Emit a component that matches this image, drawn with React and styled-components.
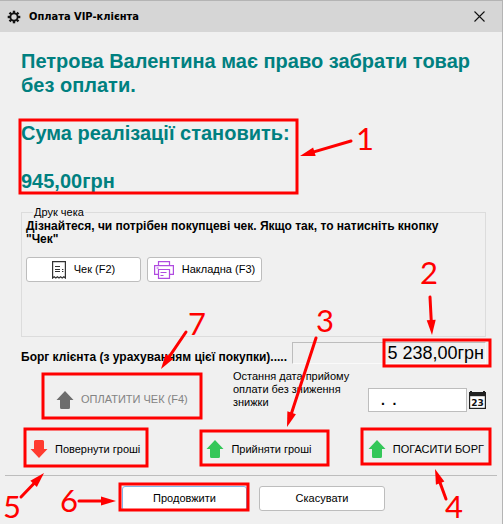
import React, { useState } from "react";
import styled, { createGlobalStyle } from "styled-components";

const marks = [
  { n: 1, x: 356, y: 150, frame: [20, 120, 277, 73], arrow: [351, 141, 300, 156] },
  { n: 2, x: 420, y: 284, frame: [384, 340, 106, 26], arrow: [430, 297, 432, 335] },
  { n: 3, x: 316, y: 332, frame: [201, 431, 127, 34], arrow: [316, 338, 287, 427] },
  { n: 4, x: 445, y: 518, frame: [362, 429, 128, 35], arrow: [446, 499, 435, 469] },
  { n: 5, x: 3, y: 518, frame: [25, 429, 122, 37], arrow: [21, 497, 44, 473] },
  { n: 6, x: 60, y: 512, frame: [120, 484, 128, 26], arrow: [79, 501, 116, 501] },
  { n: 7, x: 188, y: 335, frame: [43, 374, 158, 44], arrow: [186, 332, 161, 369] },
];

const GearIcon = () => (
  <svg width="14" height="14" viewBox="-7 -7 14 14" aria-hidden="true">
    <circle r="3.6" fill="none" stroke="#111" strokeWidth="1.8" />
    {[0, 45, 90, 135, 180, 225, 270, 315].map(a => (
      <rect key={a} x="-1.2" y="-6.3" width="2.4" height="2.4" fill="#111" transform={`rotate(${a})`} />
    ))}
  </svg>
);

const CloseIcon = () => (
  <svg width="11" height="11" viewBox="0 0 11 11" aria-hidden="true">
    <path d="M0.5 0.5l10 10M10.5 0.5l-10 10" stroke="#111" strokeWidth="1.1" />
  </svg>
);

const ReceiptIcon = () => (
  <svg width="14" height="18" viewBox="0 0 14 18" fill="none" stroke="#333" aria-hidden="true">
    <path d="M0.6 17V0.6h12.8V17l-1.6-1.3-1.6 1.3-1.6-1.3L7 17l-1.6-1.3L3.8 17l-1.6-1.3z" strokeWidth="1.2" />
    <path d="M3 5.5h5M3 8.5h5M3 10.5h5M10 8.5h1.4M10 10.5h1.4" />
  </svg>
);

const PrinterIcon = () => (
  <svg width="20" height="18" viewBox="0 0 20 18" fill="none" stroke="#b04be0" strokeWidth="1.2" aria-hidden="true">
    <path d="M4.5 4.5V0.6h11v3.9M4.5 13.4H0.6V4.6h18.8v8.8h-3.9" />
    <path d="M4.5 8.5h11v8.9h-11zM2.6 7h2M6.5 11.5h6M6.5 14.5h3" />
  </svg>
);

const ArrowIcon = ({ color, down }) => (
  <svg width="18" height="18" viewBox="0 0 18 18" aria-hidden="true">
    <path
      d="M9 0l8.5 9H14v7.500q0 1.500-1.500 1.500H5.500q-1.500 0-1.500-1.500V9H0.500z"
      fill={color}
      transform={down ? "rotate(180 9 9)" : undefined}
    />
  </svg>
);

const CalendarIcon = () => (
  <svg width="17" height="18" viewBox="0 0 17 18" aria-hidden="true">
    <path d="M1 0h2v1h11V0h2v1h1v17H0V1h1z" fill="#222" />
    <path d="M1.200 5.200h14.600v11.600H1.200z" fill="#fff" />
    <text x="8.500" y="15" textAnchor="middle" fontSize="9" fontWeight="700" fontFamily="DejaVu Sans, sans-serif" fill="#111">
      23
    </text>
  </svg>
);

// arrow head is a triangle whose tip sits on the end point
const Arrow = ({ points: [x1, y1, x2, y2] }) => {
  const angle = (Math.atan2(y2 - y1, x2 - x1) * 180) / Math.PI;
  const length = Math.hypot(x2 - x1, y2 - y1);
  return (
    <g transform={`translate(${x1} ${y1}) rotate(${angle})`}>
      <path d={`M0 0H${length - 10}`} stroke="#f00" strokeWidth="3" strokeLinecap="round" />
      <path d={`M${length} 0l-15 -4.500v9z`} fill="#f00" />
    </g>
  );
};

const App = () => {
  const [date, setDate] = useState(" .  .");

  return (
    <>
      <GlobalStyle />
      <StWindow>
        <StTitleBar>
          <GearIcon />
          <StTitle>Оплата VIP-клієнта</StTitle>
          <StIconButton type="button" aria-label="Закрити">
            <CloseIcon />
          </StIconButton>
        </StTitleBar>

        <StMain>
          <StMessage>Петрова Валентина має право забрати товар без оплати.</StMessage>
          <StMessage>
            Сума реалізації становить:
            <br />
            <br />
            945,00грн
          </StMessage>

          <StGroup>
            <StLegend>Друк чека</StLegend>
            <StHint>
              Дізнайтеся, чи потрібен покупцеві чек. Якщо так, то натисніть кнопку
              <br />
              "Чек"
            </StHint>
            <StPrintButtons>
              <StButton type="button" $width={115}>
                <ReceiptIcon />
                Чек (F2)
              </StButton>
              <StButton type="button" $width={115}>
                <PrinterIcon />
                Накладна (F3)
              </StButton>
            </StPrintButtons>
          </StGroup>

          <StDebtRow>
            <StDebtLabel htmlFor="debt">Борг клієнта (з урахуванням цієї покупки).....</StDebtLabel>
            <StDebtInput id="debt" value="5 238,00грн" readOnly />
          </StDebtRow>

          <StPayRow>
            <StFlatButton type="button" disabled $width={161} $height={49}>
              <ArrowIcon color="#6d6d6d" />
              ОПЛАТИТИ ЧЕК (F4)
            </StFlatButton>
            <StDateLabel htmlFor="date">Остання дата прийому оплати без зниження знижки</StDateLabel>
            <StDateInput id="date" value={date} onChange={e => setDate(e.target.value)} />
            <StCalendarButton type="button" aria-label="Календар">
              <CalendarIcon />
            </StCalendarButton>
          </StPayRow>

          <StActions>
            <StFlatButton type="button" $width={126} $height={40}>
              <ArrowIcon color="#ff3b30" down />
              Повернути гроші
            </StFlatButton>
            <StFlatButton type="button" $width={130} $height={40}>
              <ArrowIcon color="#34c759" />
              Прийняти гроші
            </StFlatButton>
            <StFlatButton type="button" $width={131} $height={40}>
              <ArrowIcon color="#34c759" />
              ПОГАСИТИ БОРГ
            </StFlatButton>
          </StActions>
        </StMain>

        <StFooter>
          <StButton type="button" $width={125} $focused>
            Продовжити
          </StButton>
          <StButton type="button" $width={126}>
            Скасувати
          </StButton>
        </StFooter>

        <StMarks width="503" height="524" viewBox="0 0 503 524">
          {marks.map(({ n, x, y, frame, arrow }) => (
            <g key={n}>
              <rect x={frame[0]} y={frame[1]} width={frame[2]} height={frame[3]} fill="none" stroke="#f00" strokeWidth="3" />
              <Arrow points={arrow} />
              <text x={x} y={y}>
                {n}
              </text>
            </g>
          ))}
        </StMarks>
      </StWindow>
    </>
  );
};

export default App;

const GlobalStyle = createGlobalStyle`
  * {
    box-sizing: border-box;
  }
  body {
    margin: 0;
    background-color: #f0f0f0;
    color: #000;
    font: 11px/13px "Liberation Sans", Arial, sans-serif;
  }
  button,
  input {
    font: inherit;
    color: inherit;
  }
`;

const StWindow = styled.div`
  position: relative;
  min-height: 100vh;
  border-top: 1px solid #b4b4b4;
  border-right: 1px solid #b4b4b4;
`;

const StTitleBar = styled.header`
  display: flex;
  align-items: center;
  height: 31px;
  padding: 0 17px 0 7px;
  background-color: #d6d6d6;
`;

const StTitle = styled.h1`
  flex: 1;
  margin: 0 0 0 8px;
  font: 700 11px/14px "DejaVu Sans Condensed", "DejaVu Sans", sans-serif;
`;

const StIconButton = styled.button`
  display: flex;
  padding: 0;
  border: none;
  background: none;
`;

const StMain = styled.main`
  padding: 17px 16px 0 21px;
`;

const StMessage = styled.p`
  margin: 0 0 24px;
  color: #008080;
  font-size: 20px;
  font-weight: 700;
  line-height: 24px;
`;

const StGroup = styled.fieldset`
  margin: -11px 0 0;
  padding: 1px 4px 54px;
  border: 1px solid #dcdcdc;
`;

const StLegend = styled.legend`
  margin-left: 7px;
  padding: 0 1px;
`;

const StHint = styled.p`
  margin: 0;
  font-size: 12px;
  font-weight: 700;
`;

const StPrintButtons = styled.div`
  display: flex;
  gap: 6px;
  margin-top: 11px;
`;

const StButton = styled.button`
  display: flex;
  align-items: center;
  justify-content: center;
  gap: 8px;
  width: ${({ $width }) => $width}px;
  height: 25px;
  padding: 0;
  border: 1px solid ${({ $focused }) => ($focused ? "#7eb4ea" : "#bdbdbd")};
  border-radius: 3px;
  background-color: #fff;
  white-space: nowrap;
`;

const StDebtRow = styled.div`
  display: flex;
  align-items: flex-end;
  gap: 5px;
  margin-top: 5px;
`;

const StDebtLabel = styled.label`
  font-size: 12px;
  font-weight: 700;
  white-space: nowrap;
`;

const StDebtInput = styled.input`
  flex: 1;
  min-width: 0;
  height: 22px;
  padding: 0 1px;
  border: 1px solid #fafafa;
  border-top-color: #bdbdbd;
  border-left-color: #bdbdbd;
  background-color: #f0f0f0;
  font-size: 18px;
  text-align: right;
`;

const StPayRow = styled.div`
  display: flex;
  align-items: flex-start;
  margin-top: 6px;
  padding-left: 20px;
`;

const StFlatButton = styled.button`
  display: flex;
  flex: none;
  align-items: center;
  gap: 7px;
  width: ${({ $width }) => $width}px;
  height: ${({ $height }) => $height}px;
  padding: 0 0 0 7px;
  border: none;
  background: none;
  white-space: nowrap;

  &:disabled {
    margin-top: 5px;
    padding-left: 15px;
    color: #838383;
  }
`;

const StDateLabel = styled.label`
  flex: 1;
  margin-left: 31px;
  padding-right: 5px;
`;

const StDateInput = styled.input`
  width: 99px;
  height: 24px;
  margin-top: 18px;
  padding: 0 8px;
  border: 1px solid #bdbdbd;
  background-color: #fff;
  font-size: 14px;
  font-weight: 700;
`;

const StCalendarButton = styled(StIconButton)`
  margin: 21px 0 0 2px;
`;

const StActions = styled.div`
  display: grid;
  grid-template-columns: 176fr 161fr 131fr;
  margin: 5px -6px 0 2px;
`;

const StFooter = styled.footer`
  display: flex;
  gap: 12px;
  margin: 6px 5px 0;
  padding: 10px 0 0 117px;
  border-top: 1px solid #bdbdbd;
`;

const StMarks = styled.svg`
  position: absolute;
  top: -1px;
  left: 0;
  pointer-events: none;

  text {
    fill: #f00;
    font: 31px Lato, sans-serif;
  }
`;
